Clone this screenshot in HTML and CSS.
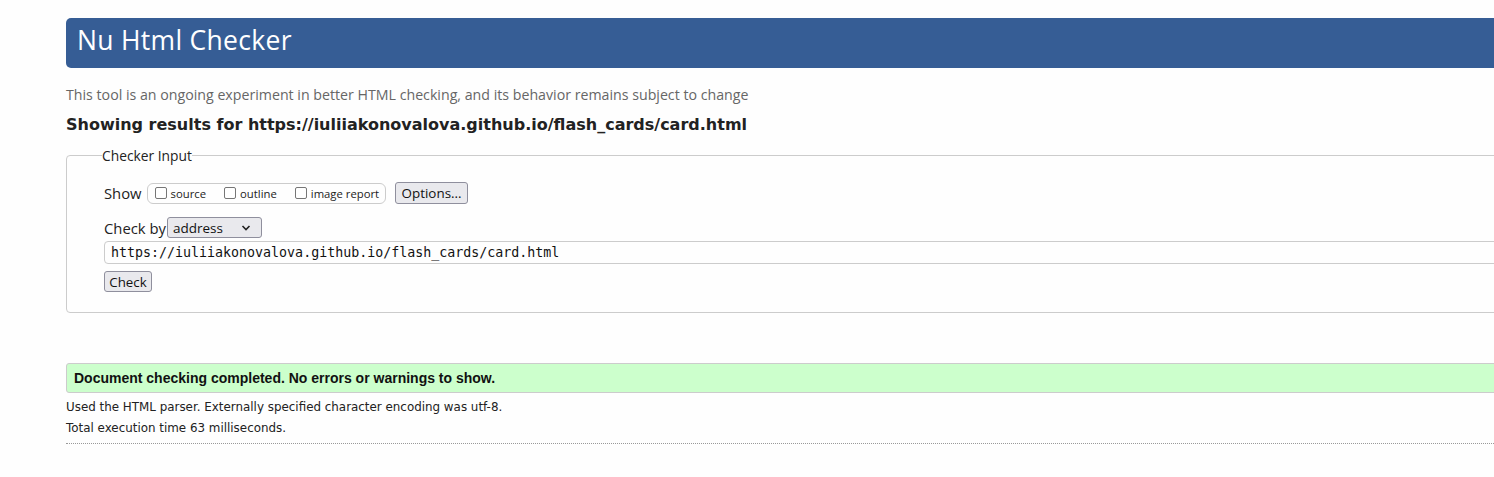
FILE: index.html
```html
<!DOCTYPE html>
<html lang="en">
<head>
<meta charset="utf-8">
<title>Nu Html Checker</title>
<link rel="stylesheet" href="styles.css">
</head>
<body>
<div class="page">
  <h1 class="banner">Nu Html Checker</h1>
  <p class="tagline">This tool is an ongoing experiment in better HTML checking, and its behavior remains subject to change</p>
  <h2 class="results-for">Showing results for https://iuliiakonovalova.github.io/flash_cards/card.html</h2>
  <form class="checker">
    <fieldset class="checker-input">
      <legend class="legend">Checker Input</legend>
      <div class="row show-row">
        <span class="label">Show</span>
        <span class="opts">
          <label class="opt"><span class="box"></span>source</label>
          <label class="opt"><span class="box"></span>outline</label>
          <label class="opt"><span class="box"></span>image report</label>
        </span>
        <button type="button" class="btn options-btn">Options...</button>
      </div>
      <div class="row checkby-row">
        <span class="label">Check by</span>
        <span class="select">address<svg class="chev" width="10" height="6" viewBox="0 0 10 6"><path d="M1.5 1l3.5 3.5L8.5 1" fill="none" stroke="#222" stroke-width="1.6"/></svg></span>
      </div>
      <div class="url">https://iuliiakonovalova.github.io/flash_cards/card.html</div>
      <button type="button" class="btn check-btn">Check</button>
    </fieldset>
  </form>
  <div class="success">Document checking completed. No errors or warnings to show.</div>
  <p class="details first">Used the HTML parser. Externally specified character encoding was utf-8.</p>
  <p class="details">Total execution time 63 milliseconds.</p>
  <hr class="dotted">
</div>
</body>
</html>
```
FILE: styles.css
```css
html, body {
  margin: 0;
  padding: 0;
  background: #fefefe;
  overflow: hidden;
}
.page {
  margin-left: 66px;
  width: 1460px;
  padding-top: 18px;
  font-family: "Open Sans", "DejaVu Sans", sans-serif;
  color: #222;
}
.banner {
  margin: 0;
  height: 50px;
  box-sizing: border-box;
  background: #365d95;
  color: #fff;
  border-radius: 5px;
  font-weight: normal;
  font-size: 26.5px;
  line-height: 44px;
  padding-left: 11px;
  letter-spacing: 0.3px;
}
.tagline {
  margin: 17px 0 0;
  font-size: 14.2px;
  line-height: 20px;
  color: #666;
}
.results-for {
  margin: 10px 0 0;
  font-family: "DejaVu Sans", sans-serif;
  font-size: 16px;
  line-height: 20px;
  font-weight: bold;
  color: #222;
}
.checker { margin: 0; }
.checker-input {
  margin: 11px 0 0;
  padding: 17px 0 20px 37px;
  border: 1px solid #ccc;
  border-radius: 4px;
}
.legend {
  padding: 0;
  margin-left: -2px;
  font-size: 13.8px;
  color: #222;
}
.row {
  display: flex;
  align-items: center;
}
.label {
  font-size: 14.8px;
  color: #222;
}
.show-row {
  height: 22px;
}
.opts {
  display: flex;
  align-items: center;
  margin-left: 5px;
  height: 21px;
  border: 1px solid #ccc;
  border-radius: 6px;
  padding: 0 6px 0 7px;
  box-sizing: border-box;
}
.opt {
  display: flex;
  align-items: center;
  font-size: 11.3px;
  color: #222;
  margin-right: 18px;
}
.opt:last-child { margin-right: 0; }
.box {
  width: 12px;
  height: 12px;
  border: 1.5px solid #767676;
  border-radius: 2px;
  margin-right: 4px;
  background: #fff;
  box-sizing: border-box;
}
.btn {
  font-family: "Open Sans", "DejaVu Sans", sans-serif;
  background: #e9e9ed;
  border: 1px solid #8f8f9d;
  border-radius: 3px;
  color: #111;
  padding: 0;
  box-sizing: border-box;
}
.options-btn {
  margin-left: 9px;
  width: 73px;
  height: 22px;
  font-size: 13.4px;
}
.checkby-row {
  margin-top: 13px;
  height: 21px;
}
.select {
  margin-left: 1px;
  width: 95px;
  height: 21px;
  box-sizing: border-box;
  border: 1px solid #8f8f9d;
  border-radius: 3px;
  background: #e9e9ed;
  font-size: 13.5px;
  display: flex;
  align-items: center;
  justify-content: space-between;
  padding: 0 10px 0 5px;
  color: #111;
}
.url {
  margin-top: 3px;
  height: 23px;
  box-sizing: border-box;
  border: 1px solid #ccc;
  border-radius: 4px;
  font-family: "DejaVu Sans Mono", monospace;
  font-size: 13.3px;
  line-height: 21px;
  padding-left: 6px;
  color: #111;
}
.check-btn {
  margin-top: 7px;
  width: 48px;
  height: 21px;
  font-size: 13.3px;
  display: block;
}
.success {
  margin-top: 50px;
  height: 30px;
  box-sizing: border-box;
  background: #ccffcc;
  border: 1px solid #ccc;
  border-radius: 3px;
  font-family: "Liberation Sans", Arial, sans-serif;
  font-weight: bold;
  font-size: 14px;
  line-height: 28px;
  padding-left: 7px;
  color: #111;
}
.details {
  margin: 0;
  font-family: "DejaVu Sans", sans-serif;
  font-size: 11.9px;
  line-height: 21px;
  color: #222;
}
.details.first { margin-top: 4px; }
.dotted {
  margin: 4px 0 0;
  border: 0;
  border-top: 1px dotted #999;
  height: 0;
}
```
